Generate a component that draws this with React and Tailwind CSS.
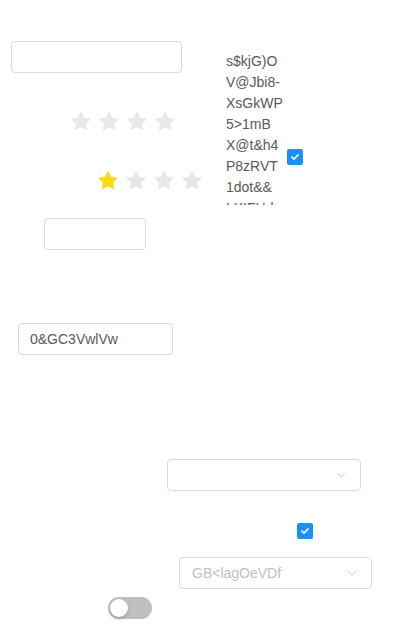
import { FiChevronDown } from "react-icons/fi";

const starPath =
  "M908.1 353.1l-253.9-36.9L540.7 86.1c-3.1-6.3-8.2-11.4-14.5-14.5-15.8-7.8-35-1.3-42.9 14.5L369.8 316.2l-253.9 36.9c-7 1-13.4 4.3-18.3 9.3a32.05 32.05 0 00.6 45.3l183.7 179.1-43.4 252.9a31.95 31.95 0 0046.4 33.7L512 754l227.1 119.4c6.2 3.3 13.4 4.4 20.3 3.2 17.4-3 29.1-19.5 26.1-36.9l-43.4-252.9 183.7-179.1c5-4.9 8.3-11.3 9.3-18.3 2.7-17.5-9.5-33.7-27-36.3z";

const lines = ["s$kjG)O", "V@Jbi8-", "XsGkWP", "5>1mB", "X@t&h4", "P8zRVT", "1dot&&", "LXIFHd"];

function Star({ on }) {
  return (
    <svg viewBox="64 64 896 896" className="w-[20px] h-[20px] mr-[8px]" fill={on ? "#fadb14" : "#e8e8e8"}>
      <path d={starPath} />
    </svg>
  );
}

function Rate({ value, className }) {
  return (
    <div className={`flex ${className}`}>
      {[0, 1, 2, 3].map((i) => (
        <Star key={i} on={i < value} />
      ))}
    </div>
  );
}

function Checkbox({ className }) {
  return (
    <span className={`flex items-center justify-center w-[16px] h-[16px] rounded-[2px] bg-[#1890ff] ${className}`}>
      <svg viewBox="0 0 12 12" className="w-[10px] h-[10px]" fill="none" stroke="white" strokeWidth="2" strokeLinecap="square">
        <path d="M2.5 6.2l2.3 2.3 4.7-4.8" />
      </svg>
    </span>
  );
}

function Select({ placeholder, className }) {
  return (
    <div className={`flex items-center justify-between h-[32px] px-[12px] border border-[#d9d9d9] rounded-[4px] ${className}`}>
      <span className="text-[14px] text-[#bfbfbf]">{placeholder}</span>
      <FiChevronDown className="text-[#bfbfbf] w-[14px] h-[14px]" strokeWidth={1.5} />
    </div>
  );
}

export default function App() {
  return (
    <div className="w-[414px] h-[642px] bg-white overflow-hidden font-['Liberation_Sans',Arial,sans-serif] text-[14px] text-[#595959]">
      <div className="flex pt-[41px]">
        <div className="flex flex-col w-[226px] pl-[11px]">
          <div className="w-[171px] h-[32px] border border-[#d9d9d9] rounded-[4px]" />
          <Rate value={0} className="mt-[39px] ml-[60px]" />
          <Rate value={1} className="mt-[39px] ml-[87px]" />
        </div>
        <div className="flex">
          <div className="w-[57px] h-[154px] mt-[10px] overflow-hidden leading-[21px]">
            {lines.map((l) => (
              <div key={l}>{l}</div>
            ))}
          </div>
          <Checkbox className="ml-[4px] mt-[108px]" />
        </div>
      </div>

      <div className="ml-[44px] mt-[13px] w-[102px] h-[32px] border border-[#d9d9d9] rounded-[4px]" />

      <div className="ml-[18px] mt-[73px] w-[155px] h-[32px] border border-[#d9d9d9] rounded-[4px] px-[11px] flex items-center text-[#595959]">
        0&amp;GC3VwlVw
      </div>

      <Select className="ml-[167px] mt-[104px] w-[194px]" />

      <Checkbox className="ml-[297px] mt-[32px]" />

      <Select placeholder="GB<lagOeVDf" className="ml-[179px] mt-[18px] w-[193px]" />

      <div className="ml-[108px] mt-[8px] w-[44px] h-[22px] rounded-full bg-[#bfbfbf] flex items-center px-[2px]">
        <span className="w-[18px] h-[18px] rounded-full bg-white shadow-[0_2px_4px_rgba(0,35,11,0.2)]" />
      </div>
    </div>
  );
}
